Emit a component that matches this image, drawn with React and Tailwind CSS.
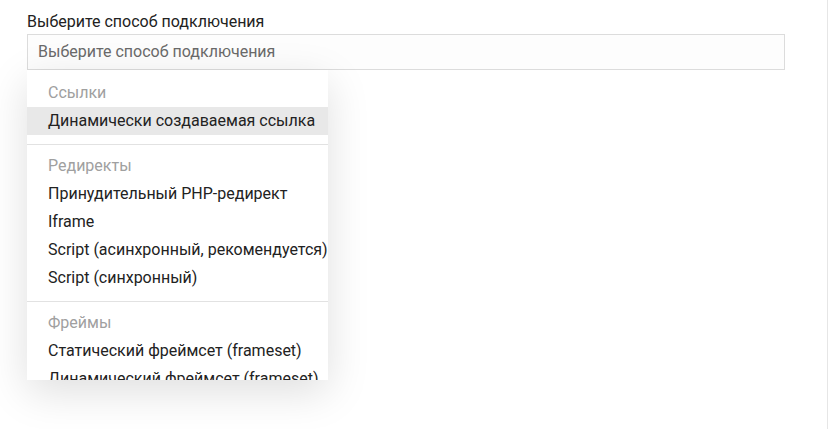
import React from "react";

const groups = [
  {
    title: "Ссылки",
    items: ["Динамически создаваемая ссылка"],
  },
  {
    title: "Редиректы",
    items: [
      "Принудительный PHP-редирект",
      "Iframe",
      "Script (асинхронный, рекомендуется)",
      "Script (синхронный)",
    ],
  },
  {
    title: "Фреймы",
    items: ["Статический фреймсет (frameset)", "Динамический фреймсет (frameset)"],
  },
];

const active = "Динамически создаваемая ссылка";

export default function App() {
  return (
    <div className="min-h-[429px] bg-white font-['Roboto',sans-serif] text-[16px] text-[#222] border-r border-[#e6e6e6] w-[828px]">
      <div className="pl-[27px] pr-[42px] pt-[11px]">
        <label className="block leading-[22px] mb-px">Выберите способ подключения</label>
        <div className="relative">
          <div className="h-[36px] border border-[#dcdcdc] bg-[#fdfdfd] px-[10px] flex items-center text-[#6a6a6a]">
            Выберите способ подключения
          </div>
          <div className="absolute left-0 top-[36px] w-[301px] h-[310px] overflow-hidden bg-white shadow-[0_12px_40px_rgba(0,0,0,0.13)]">
            {groups.map((g, i) => (
              <div
                key={g.title}
                className={
                  i === 0
                    ? "pt-[9px] pb-[9px]"
                    : "pt-[7px] pb-[9px] border-t border-[#e2e2e2]"
                }
              >
                <div className="h-[28px] leading-[28px] px-[21px] text-[#a0a0a0]">{g.title}</div>
                {g.items.map((item) => (
                  <div
                    key={item}
                    className={
                      item === active
                        ? "h-[28px] leading-[28px] px-[21px] bg-[#e8e8e8] whitespace-nowrap"
                        : "h-[28px] leading-[28px] px-[21px] whitespace-nowrap"
                    }
                  >
                    {item}
                  </div>
                ))}
              </div>
            ))}
          </div>
        </div>
      </div>
    </div>
  );
}
